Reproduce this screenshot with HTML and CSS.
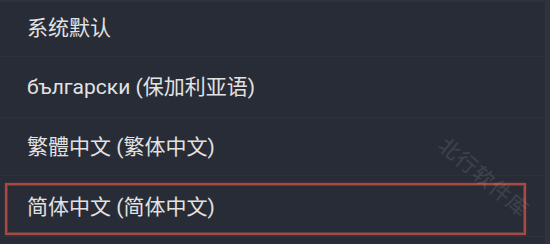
FILE: index.html
```html
<!DOCTYPE html>
<html lang="zh-CN">
<head>
<meta charset="utf-8">
<link rel="stylesheet" href="styles.css">
</head>
<body>
<div class="screen">
  <ul class="list">
    <li class="row row-1"><span class="label">系统默认</span></li>
    <li class="row row-2"><span class="label">български (保加利亚语)</span></li>
    <li class="row row-3"><span class="label">繁體中文 (繁体中文)</span></li>
    <li class="row row-4"><div class="highlight"><span class="label">简体中文 (简体中文)</span></div></li>
  </ul>
  <div class="watermark">北行软件库</div>
</div>
</body>
</html>
```
FILE: styles.css
```css
html, body {
  margin: 0;
  padding: 0;
  background: #282c36;
}
.screen {
  position: relative;
  width: 550px;
  height: 244px;
  overflow: hidden;
  background: #282c36;
  box-shadow: inset -5px 0 0 #2f333d, inset 0 2px 0 #2e323c;
}
.list {
  list-style: none;
  margin: 0;
  padding: 0;
}
.row {
  display: flex;
  align-items: center;
  box-sizing: border-box;
  border-bottom: 1px solid #2e323d;
  font-family: Roboto, "Noto Sans CJK SC", sans-serif;
  font-size: 21px;
  color: #e2e2e2;
}
.row-1 { height: 57px; }
.row-2 { height: 61px; }
.row-3 { height: 58px; }
.row-4 {
  height: 61px;
  align-items: flex-start;
}
.label {
  padding-left: 27px;
  line-height: 24px;
}
.highlight {
  display: flex;
  align-items: center;
  box-sizing: border-box;
  margin: 7px 0 0 5px;
  width: 521px;
  height: 52px;
  border: 2px solid #a84a43;
  box-shadow: inset 0 0 0 1px rgba(190, 110, 100, 0.3), 0 0 2px rgba(168, 74, 67, 0.5);
}
.highlight .label {
  padding-left: 20px;
  margin-top: -4px;
}
.watermark {
  position: absolute;
  left: 428px;
  top: 166px;
  width: 125px;
  font-family: "Noto Sans CJK SC", sans-serif;
  font-size: 21px;
  font-weight: 500;
  letter-spacing: 1px;
  color: rgba(200, 205, 215, 0.13);
  transform: rotate(40deg);
  transform-origin: center;
  white-space: nowrap;
}
```
